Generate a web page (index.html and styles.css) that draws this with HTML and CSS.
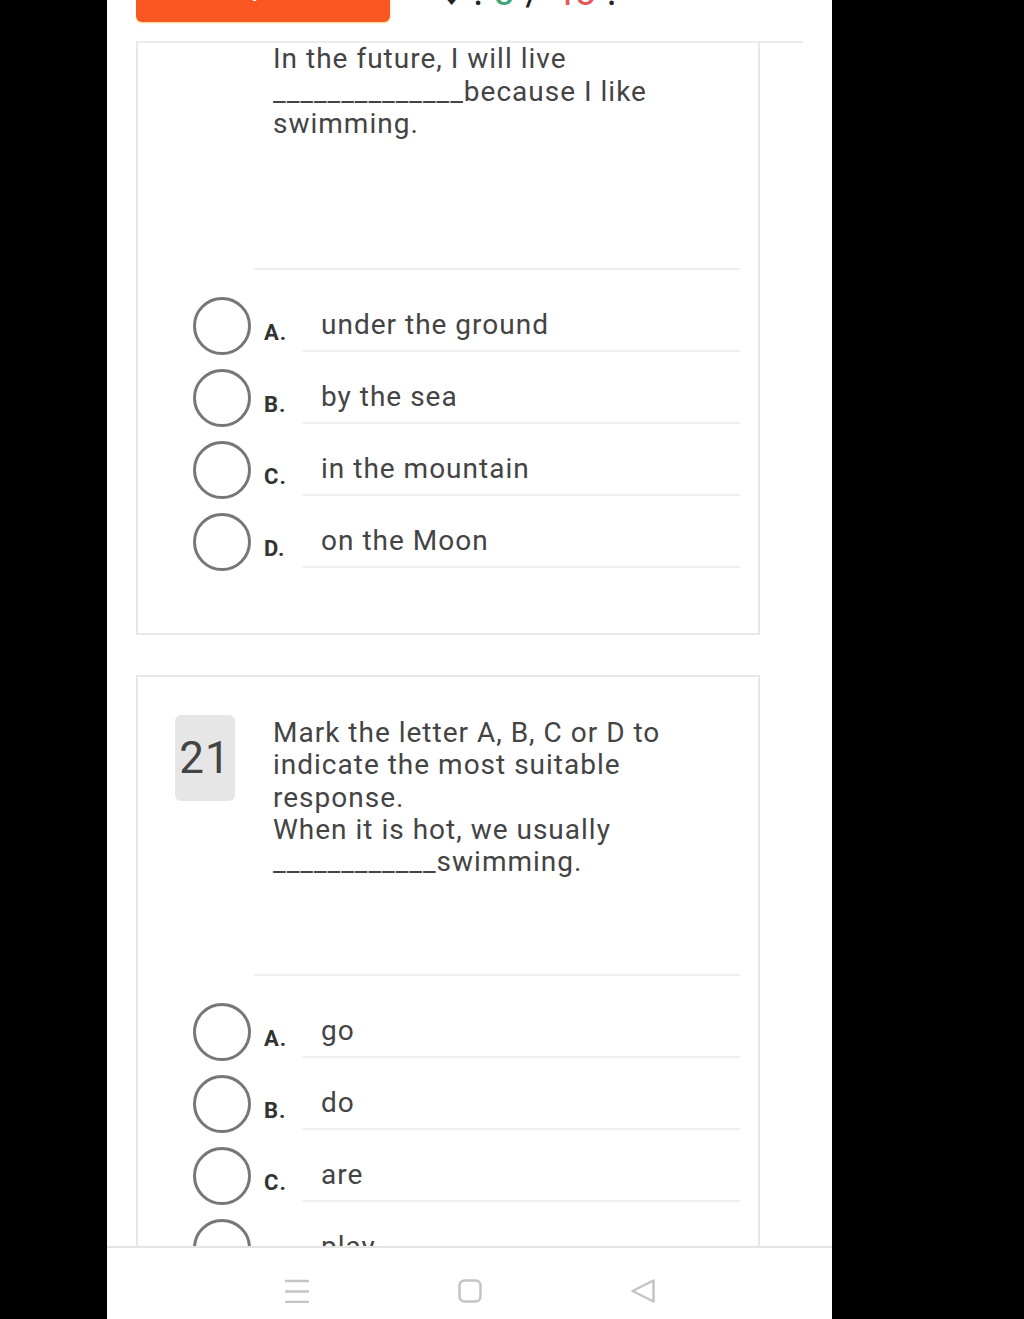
FILE: index.html
```html
<!DOCTYPE html>
<html lang="vi">
<head>
    <meta charset="UTF-8">
    <meta name="viewport" content="width=device-width, initial-scale=1.0">
    <title>Bài kiểm tra</title>
    <link rel="stylesheet" href="styles.css">
</head>
<body>
    <div class="screen">
        <!-- Top bar (scrolled partly out of view) -->
        <header class="topbar">
            <button class="submit">Nộp bài</button>
            <div class="score"><span class="heart">&#9829;</span> : <span class="ok">0</span> / <span class="bad">40</span> .</div>
        </header>

        <main class="sheet">
            <!-- Question 20 -->
            <section class="card card--cut">
                <div class="question">
                    <div class="qnum">20</div>
                    <div class="qtext">Mark the letter A, B, C or D to indicate the most suitable response.<br>In the future, I will live ______________because I like swimming.<br>&nbsp;</div>
                </div>
                <hr class="divider">
                <ul class="options">
                    <li class="option"><span class="radio"></span><span class="letter">A.</span><span class="answer">under the ground</span></li>
                    <li class="option"><span class="radio"></span><span class="letter">B.</span><span class="answer">by the sea</span></li>
                    <li class="option"><span class="radio"></span><span class="letter">C.</span><span class="answer">in the mountain</span></li>
                    <li class="option"><span class="radio"></span><span class="letter">D.</span><span class="answer">on the Moon</span></li>
                </ul>
            </section>

            <!-- Question 21 -->
            <section class="card">
                <div class="question">
                    <div class="qnum">21</div>
                    <div class="qtext">Mark the letter A, B, C or D to indicate the most suitable response.<br>When it is hot, we usually ____________swimming.</div>
                </div>
                <hr class="divider">
                <ul class="options">
                    <li class="option"><span class="radio"></span><span class="letter">A.</span><span class="answer">go</span></li>
                    <li class="option"><span class="radio"></span><span class="letter">B.</span><span class="answer">do</span></li>
                    <li class="option"><span class="radio"></span><span class="letter">C.</span><span class="answer">are</span></li>
                    <li class="option"><span class="radio"></span><span class="letter">D.</span><span class="answer">play</span></li>
                </ul>
            </section>
        </main>

        <!-- Android navigation bar -->
        <nav class="navbar">
            <svg class="nav-icon" viewBox="0 0 24 24"><path d="M1 2h22M1 12.5h22M1 23h22"/></svg>
            <svg class="nav-icon" viewBox="0 0 24 24"><rect x="1.5" y="1.5" width="21" height="21" rx="5"/></svg>
            <svg class="nav-icon" viewBox="0 0 24 24"><path d="M22.5 1.5L1.5 12l21 10.5z"/></svg>
        </nav>
    </div>
</body>
</html>
```

FILE: styles.css
```css
body {
    margin: 0;
    background-color: #000;
    font-family: Roboto, "Noto Sans", sans-serif;
}

.screen {
    width: 725px;
    height: 1319px;
    margin-left: 107px;
    background: #fff;
    display: flex;
    flex-direction: column;
    overflow: hidden;
}

/* top bar */
.topbar {
    flex: none;
    height: 41px;
    margin: 0 29px;
    border-bottom: 2px solid #ececec;
    display: flex;
    align-items: flex-start;
    gap: 50px;
    overflow: hidden;
}

.submit {
    width: 254px;
    height: 52px;
    margin-top: -30px;
    padding: 0 0 18px;
    border: none;
    border-radius: 6px;
    background: #fb5722;
    color: #fff;
    font: 500 26px Roboto, sans-serif;
    box-shadow: 0 1px 2px rgba(255, 190, 60, 0.7);
}

.score {
    margin-top: -28px;
    font-size: 40px;
    line-height: 40px;
    color: #222;
    white-space: nowrap;
}

.score .heart {
    font-family: "DejaVu Sans", sans-serif;
    font-size: 26px;
}

.score .ok {
    color: #3ba57b;
}

.score .bad {
    color: #e2585b;
}

/* questions */
.sheet {
    flex: 1;
    overflow: hidden;
}

.card {
    margin: 0 72px 40px 29px;
    border: 2px solid #e8e8e8;
    padding: 40px 18px 55px 37px;
}

.card--cut {
    margin-top: -139px;
}

.question {
    display: flex;
    gap: 38px;
    padding-bottom: 95px;
}

.qnum {
    flex: none;
    width: 60px;
    height: 86px;
    margin-top: -2px;
    background: #e6e6e6;
    border-radius: 6px;
    font-size: 44px;
    letter-spacing: 1px;
    color: #444;
    display: flex;
    align-items: center;
    justify-content: center;
}

.qtext {
    flex: 1;
    font-size: 28px;
    letter-spacing: 1px;
    line-height: 32.4px;
    color: #444;
}

.divider {
    height: 2px;
    margin: 0 0 20px 79px;
    border: none;
    background: #eee;
}

.options {
    list-style: none;
    margin: 0;
    padding: 0;
}

.option {
    display: flex;
    align-items: center;
    height: 72px;
}

.radio {
    flex: none;
    width: 52px;
    height: 52px;
    margin-left: 18px;
    border: 3px solid #777;
    border-radius: 50%;
}

.letter {
    flex: none;
    width: 39px;
    margin-left: 13px;
    padding-top: 14px;
    font-size: 22px;
    letter-spacing: 1px;
    font-weight: 700;
    color: #333;
}

.answer {
    flex: 1;
    height: 50px;
    line-height: 50px;
    padding-left: 18px;
    border-bottom: 2px solid #eee;
    font-size: 28px;
    letter-spacing: 1px;
    color: #444;
}

/* navigation bar */
.navbar {
    flex: none;
    height: 71px;
    border-top: 2px solid #e4e4e4;
    background: #fff;
    display: flex;
    justify-content: center;
    align-items: flex-start;
    gap: 149px;
}

.nav-icon {
    width: 24px;
    height: 24px;
    margin-top: 31px;
    fill: none;
    stroke: #c4c4c4;
    stroke-width: 2.5;
    stroke-linejoin: round;
    stroke-linecap: round;
}
```
